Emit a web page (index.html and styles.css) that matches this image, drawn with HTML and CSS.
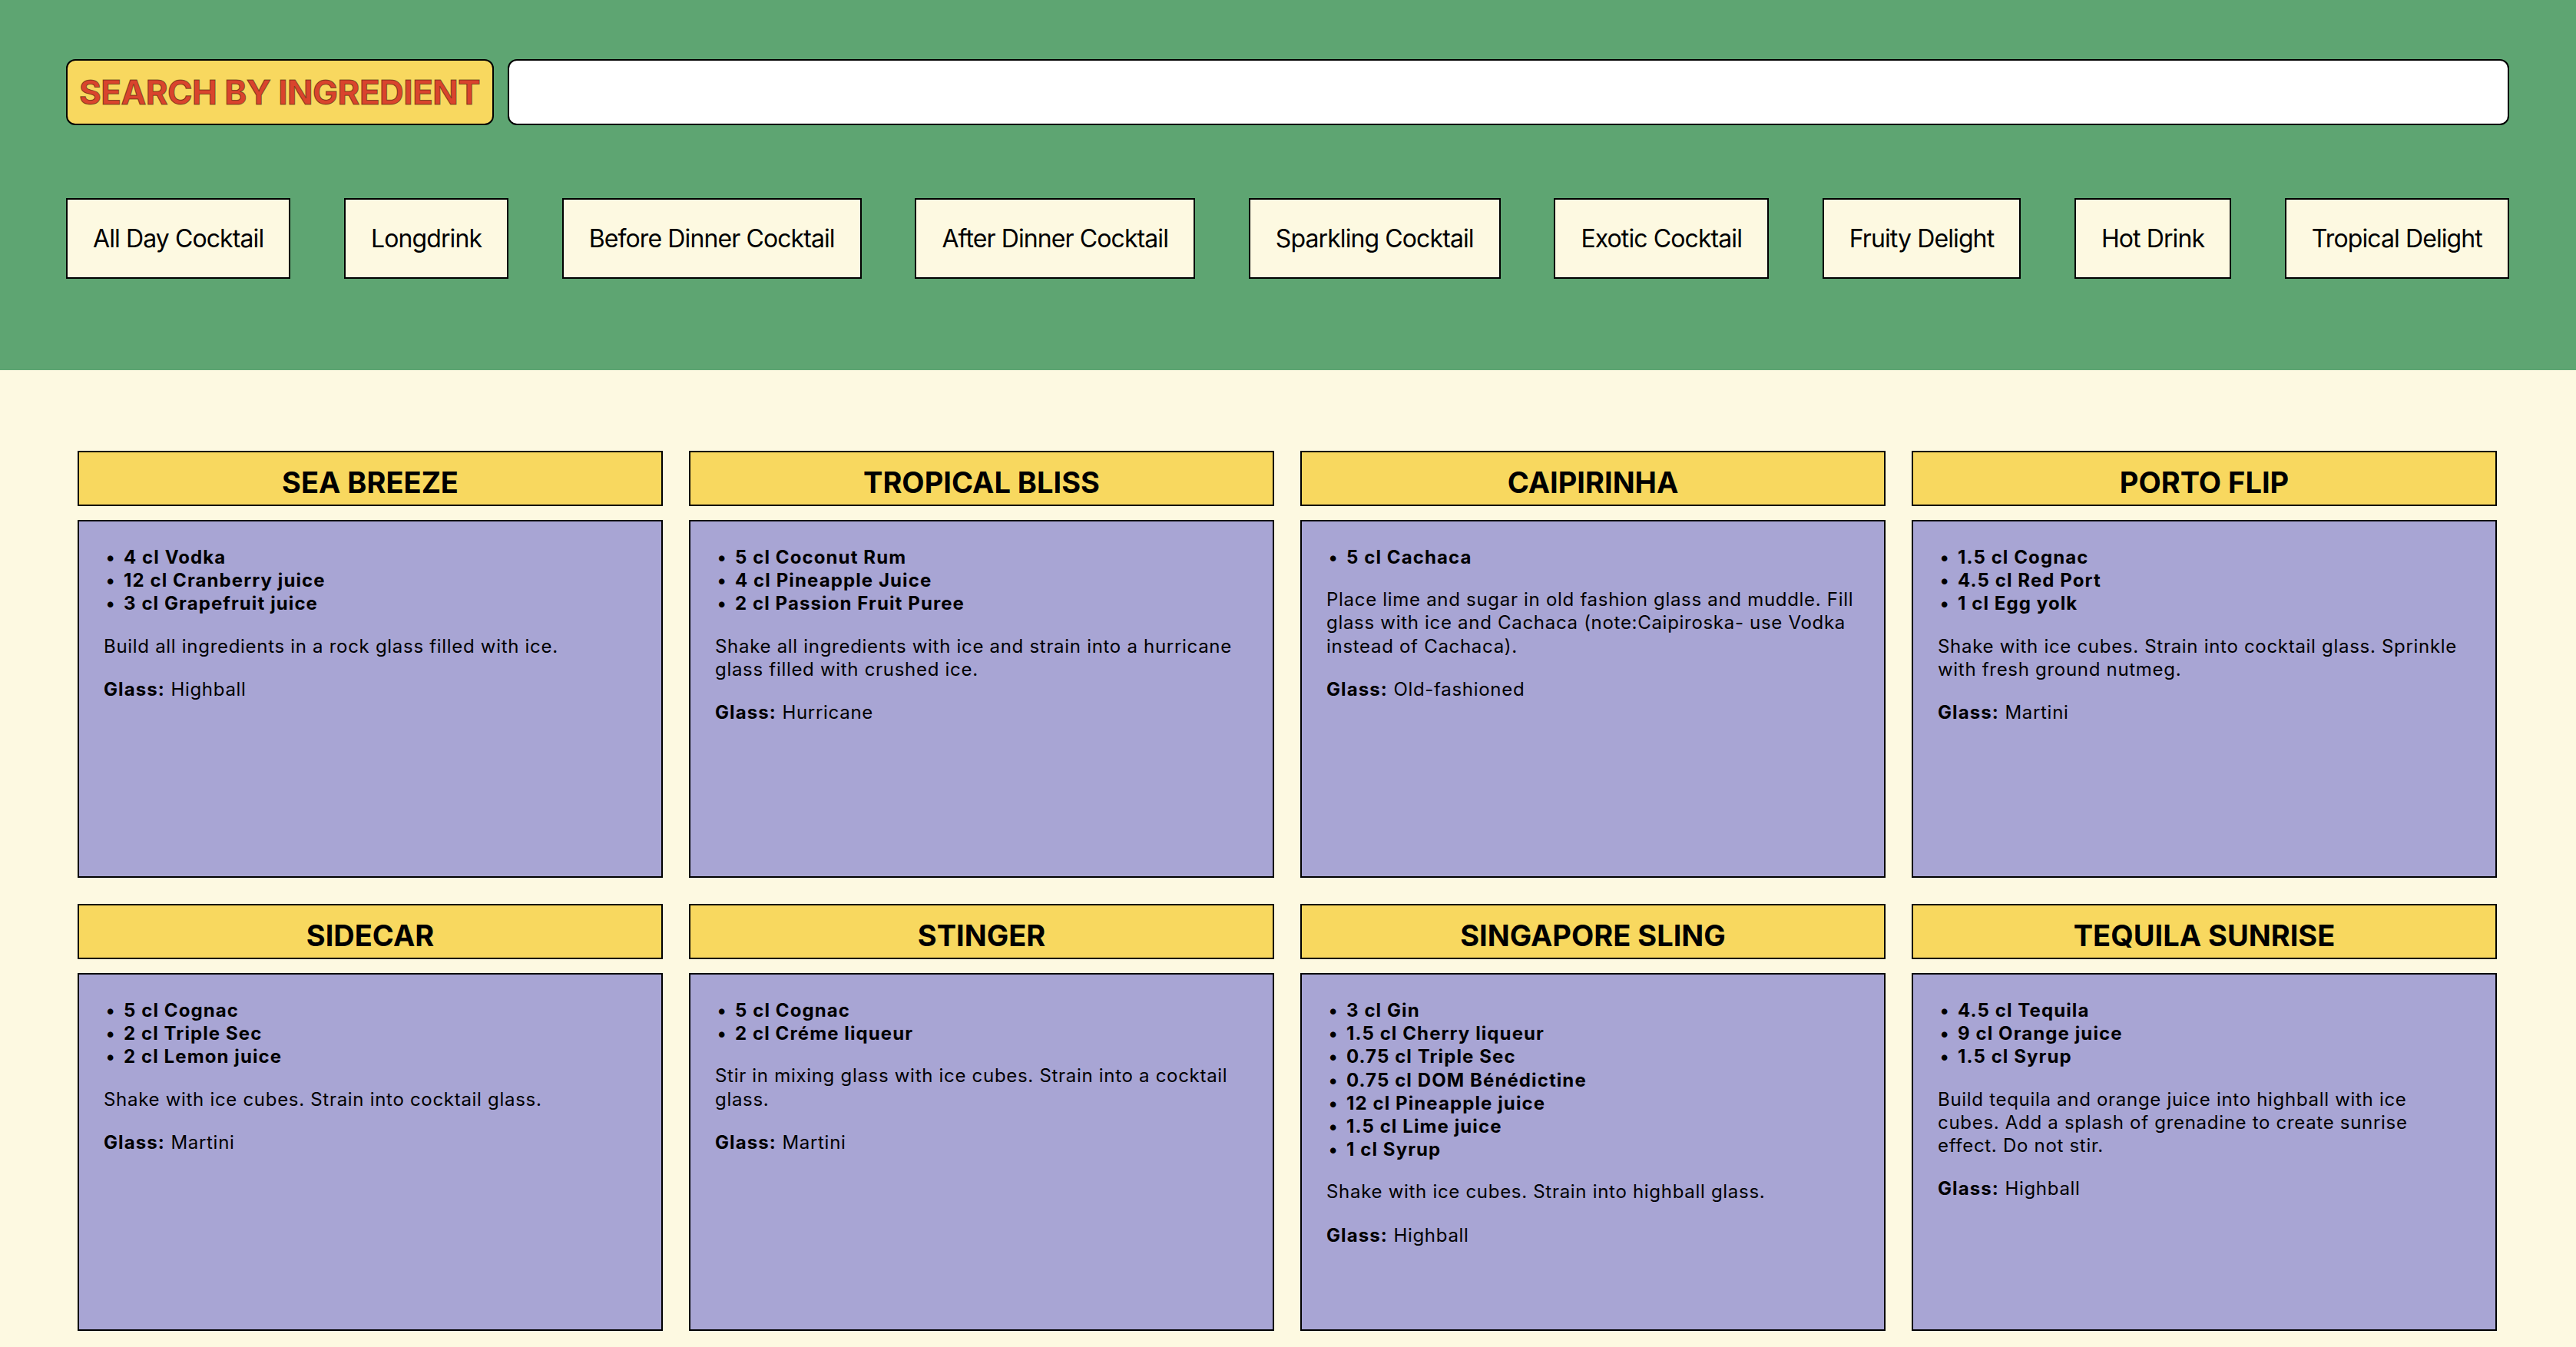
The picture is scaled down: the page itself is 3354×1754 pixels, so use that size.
FILE: index.html
```html
<!DOCTYPE html>
<html lang="en">
<head>
<meta charset="utf-8">
<title>Cocktails</title>
<link rel="stylesheet" href="styles.css">
</head>
<body>
<header class="topbar">
  <div class="search-row">
    <label class="search-label" for="ingredient">SEARCH BY INGREDIENT</label>
    <input class="search-input" id="ingredient" type="text">
  </div>
  <nav class="categories">
    <button class="cat">All Day Cocktail</button>
    <button class="cat">Longdrink</button>
    <button class="cat">Before Dinner Cocktail</button>
    <button class="cat">After Dinner Cocktail</button>
    <button class="cat">Sparkling Cocktail</button>
    <button class="cat">Exotic Cocktail</button>
    <button class="cat">Fruity Delight</button>
    <button class="cat">Hot Drink</button>
    <button class="cat">Tropical Delight</button>
  </nav>
</header>
<main class="grid">
  <article class="card">
    <h2 class="card-title">SEA BREEZE</h2>
    <div class="card-body">
      <ul class="ingredients">
        <li>4 cl Vodka</li>
        <li>12 cl Cranberry juice</li>
        <li>3 cl Grapefruit juice</li>
      </ul>
      <p class="desc">Build all ingredients in a rock glass filled with ice.</p>
      <p class="glass"><b>Glass:</b> Highball</p>
    </div>
  </article>
  <article class="card">
    <h2 class="card-title">TROPICAL BLISS</h2>
    <div class="card-body">
      <ul class="ingredients">
        <li>5 cl Coconut Rum</li>
        <li>4 cl Pineapple Juice</li>
        <li>2 cl Passion Fruit Puree</li>
      </ul>
      <p class="desc">Shake all ingredients with ice and strain into a hurricane glass filled with crushed ice.</p>
      <p class="glass"><b>Glass:</b> Hurricane</p>
    </div>
  </article>
  <article class="card">
    <h2 class="card-title">CAIPIRINHA</h2>
    <div class="card-body">
      <ul class="ingredients">
        <li>5 cl Cachaca</li>
      </ul>
      <p class="desc">Place lime and sugar in old fashion glass and muddle. Fill glass with ice and Cachaca (note:Caipiroska- use Vodka instead of Cachaca).</p>
      <p class="glass"><b>Glass:</b> Old-fashioned</p>
    </div>
  </article>
  <article class="card">
    <h2 class="card-title">PORTO FLIP</h2>
    <div class="card-body">
      <ul class="ingredients">
        <li>1.5 cl Cognac</li>
        <li>4.5 cl Red Port</li>
        <li>1 cl Egg yolk</li>
      </ul>
      <p class="desc">Shake with ice cubes. Strain into cocktail glass. Sprinkle with fresh ground nutmeg.</p>
      <p class="glass"><b>Glass:</b> Martini</p>
    </div>
  </article>
  <article class="card">
    <h2 class="card-title">SIDECAR</h2>
    <div class="card-body">
      <ul class="ingredients">
        <li>5 cl Cognac</li>
        <li>2 cl Triple Sec</li>
        <li>2 cl Lemon juice</li>
      </ul>
      <p class="desc">Shake with ice cubes. Strain into cocktail glass.</p>
      <p class="glass"><b>Glass:</b> Martini</p>
    </div>
  </article>
  <article class="card">
    <h2 class="card-title">STINGER</h2>
    <div class="card-body">
      <ul class="ingredients">
        <li>5 cl Cognac</li>
        <li>2 cl Créme liqueur</li>
      </ul>
      <p class="desc">Stir in mixing glass with ice cubes. Strain into a cocktail glass.</p>
      <p class="glass"><b>Glass:</b> Martini</p>
    </div>
  </article>
  <article class="card">
    <h2 class="card-title">SINGAPORE SLING</h2>
    <div class="card-body">
      <ul class="ingredients">
        <li>3 cl Gin</li>
        <li>1.5 cl Cherry liqueur</li>
        <li>0.75 cl Triple Sec</li>
        <li>0.75 cl DOM Bénédictine</li>
        <li>12 cl Pineapple juice</li>
        <li>1.5 cl Lime juice</li>
        <li>1 cl Syrup</li>
      </ul>
      <p class="desc">Shake with ice cubes. Strain into highball glass.</p>
      <p class="glass"><b>Glass:</b> Highball</p>
    </div>
  </article>
  <article class="card">
    <h2 class="card-title">TEQUILA SUNRISE</h2>
    <div class="card-body">
      <ul class="ingredients">
        <li>4.5 cl Tequila</li>
        <li>9 cl Orange juice</li>
        <li>1.5 cl Syrup</li>
      </ul>
      <p class="desc">Build tequila and orange juice into highball with ice cubes. Add a splash of grenadine to create sunrise effect. Do not stir.</p>
      <p class="glass"><b>Glass:</b> Highball</p>
    </div>
  </article>
</main>
</body>
</html>
```

FILE: styles.css
```css
* { box-sizing: border-box; }

html, body {
  margin: 0;
  padding: 0;
  background: #fdf9e1;
  font-family: Inter, "Noto Sans", "Liberation Sans", sans-serif;
  color: #000;
}

.topbar {
  background: #5ea572;
  padding: 77px 87px 119px 86px;
}

.search-row {
  display: flex;
  gap: 18px;
  align-items: stretch;
}

.search-label {
  display: flex;
  align-items: center;
  height: 86px;
  padding: 0 16px 0 15px;
  background: #f8d85f;
  border: 2px solid #000;
  border-radius: 12px;
  font-size: 44px;
  font-weight: 700;
  letter-spacing: -0.55px;
  color: #d9442d;
  -webkit-text-stroke: 1px rgba(40, 20, 0, 0.55);
  white-space: nowrap;
}

.search-input {
  flex: 1;
  height: 86px;
  background: #fff;
  border: 2px solid #000;
  border-radius: 12px;
  font-size: 32px;
  font-family: inherit;
  padding: 0 20px;
  outline: none;
}

.categories {
  display: flex;
  justify-content: space-between;
  margin-top: 95px;
}

.cat {
  background: #fdf9e1;
  border: 2px solid #000;
  border-radius: 0;
  padding: 31px 33px;
  font-family: inherit;
  font-size: 32px;
  line-height: 39px;
  letter-spacing: -0.9px;
  color: #000;
  white-space: nowrap;
}

.grid {
  display: grid;
  grid-template-columns: repeat(4, 1fr);
  gap: 34px;
  padding: 105px 103px 20px 101px;
}

.card-title {
  margin: 0 0 18px;
  height: 72px;
  padding: 16px 0 6px;
  background: #f8d85f;
  border: 2px solid #000;
  font-size: 38px;
  line-height: 46px;
  font-weight: 700;
  text-align: center;
}

.card-body {
  height: 466px;
  padding: 32px;
  background: #a8a5d4;
  border: 2px solid #000;
  font-size: 24px;
  line-height: 30.2px;
  letter-spacing: 0.7px;
}

.ingredients {
  list-style: none;
  margin: 0 0 25px;
  padding: 0;
}

.ingredients li {
  font-weight: 700;
  letter-spacing: 1.1px;
}

.ingredients li::before {
  content: "•";
  display: inline-block;
  width: 23px;
  padding-left: 3px;
  letter-spacing: 0;
}

.desc {
  margin: 0 0 26px;
}

.glass {
  margin: 0;
}

.glass b {
  font-weight: 700;
  letter-spacing: 1.1px;
}
```
